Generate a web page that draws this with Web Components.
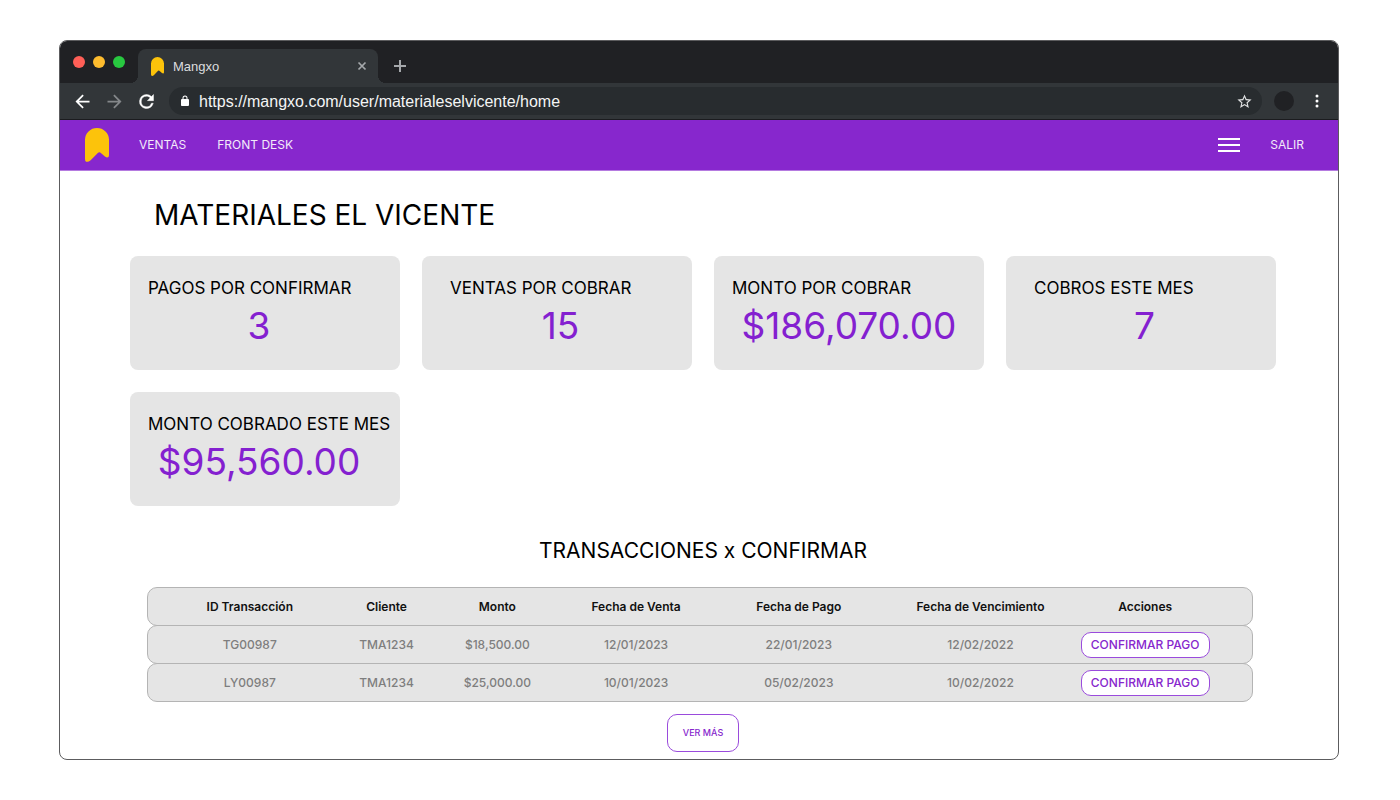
<!DOCTYPE html>
<html lang="es">
<head>
<meta charset="utf-8">
<meta name="viewport" content="width=device-width, initial-scale=1">
<title>Mangxo</title>
<style>
  body { margin: 0; background: #fff; color: #000; font-family: Inter, "Open Sans", sans-serif; }
</style>
</head>
<body>
<mx-browser tab-title="Mangxo" url="https://mangxo.com/user/materialeselvicente/home">
  <mx-navbar>
    <mx-nav-link href="#ventas">VENTAS</mx-nav-link>
    <mx-nav-link href="#front-desk">FRONT DESK</mx-nav-link>
    <mx-nav-link slot="end" href="#salir">SALIR</mx-nav-link>
  </mx-navbar>
  <mx-dashboard>
    <span slot="title">MATERIALES EL VICENTE</span>
    <mx-stat slot="stats" label="PAGOS POR CONFIRMAR">3</mx-stat>
    <mx-stat slot="stats" label="VENTAS POR COBRAR" inset>15</mx-stat>
    <mx-stat slot="stats" label="MONTO POR COBRAR" even>$186,070.00</mx-stat>
    <mx-stat slot="stats" label="COBROS ESTE MES" inset>7</mx-stat>
    <mx-stat slot="stats" label="MONTO COBRADO ESTE MES">$95,560.00</mx-stat>
    <span slot="section">TRANSACCIONES x CONFIRMAR</span>
    <mx-transactions></mx-transactions>
    <mx-button slot="more" size="large">VER MÁS</mx-button>
  </mx-dashboard>
</mx-browser>

<script>
const define = (name, render) => customElements.define(name, class extends HTMLElement {
  constructor() {
    super();
    this.attachShadow({ mode: "open" });
  }
  connectedCallback() {
    this.shadowRoot.innerHTML = render(this);
  }
});

define("mx-logo", () => `
  <style>
    :host { display: block; flex: none; }
    svg { display: block; width: 100%; height: 100%; }
  </style>
  <svg viewBox="0 0 68 100" preserveAspectRatio="none" aria-hidden="true">
    <path fill="#fcc30b" d="M0 34A34 34 0 0 1 68 34V80Q68 88 60 86Q56 84 50 78L43 72Q40 70 37 73L16 95Q9 101 3 99Q0 97 0 91Z"/>
  </svg>`);

define("mx-browser", el => `
  <style>
    :host { display: flex; flex-direction: column; box-sizing: border-box; min-height: calc(100vh - 80px);
      margin: 40px 61px 40px 59px; border: 1px solid #5c5c5e; border-radius: 8px; overflow: hidden;
      font-family: Inter, "Open Sans", sans-serif; }
    button { display: grid; place-items: center; margin: 0; padding: 0; border: 0; background: none; }
    svg { display: block; }
    .tabs { display: flex; align-items: flex-end; height: 42px; background: #202124; }
    .lights { display: flex; gap: 8px; height: 42px; align-items: center; padding: 0 13px; }
    .lights i { width: 12px; height: 12px; border-radius: 50%; background: var(--c); }
    .tab { position: relative; display: flex; align-items: center; box-sizing: border-box; width: 240px; height: 34px;
      padding: 0 10px 0 13px; border-radius: 8px 8px 0 0; background: #323639; }
    .tab::before, .tab::after { content: ""; position: absolute; bottom: 0; width: 8px; height: 8px; }
    .tab::before { right: 100%; background: radial-gradient(circle at 0 0, transparent 8px, #323639 8px); }
    .tab::after { left: 100%; background: radial-gradient(circle at 100% 0, transparent 8px, #323639 8px); }
    .tab mx-logo { width: 13px; height: 19px; }
    .tab span { flex: 1; margin-left: 9px; font: 13px "Liberation Sans", Arial, sans-serif; color: #dcdddf; }
    .plus { width: 12px; height: 34px; margin-left: 16px; }
    .bar { display: flex; align-items: center; height: 36px; padding: 0 14px 0 12px; background: #323639;
      border-bottom: 1px solid #1b1c1f; }
    .history { display: flex; gap: 11px; margin-right: 12px; }
    .address { display: flex; flex: 1; align-items: center; gap: 8px; height: 28px; min-width: 0; padding: 0 9px 0 10px;
      border-radius: 14px; background: #282c2f; }
    input { flex: 1; min-width: 0; box-sizing: border-box; height: 28px; padding: 2px 0 0; border: 0; outline: 0;
      background: none; color: #f4f5f5; font: 16px "Liberation Sans", Arial, sans-serif; }
    .avatar { width: 20px; height: 20px; margin: 0 16px 0 12px; border-radius: 50%; background: #202124; }
    .page { flex: 1; }
  </style>
  <div class="tabs">
    <div class="lights"><i style="--c:#ff5f57"></i><i style="--c:#febc2e"></i><i style="--c:#28c840"></i></div>
    <div class="tab">
      <mx-logo></mx-logo>
      <span>${el.getAttribute("tab-title")}</span>
      <button aria-label="Cerrar pestaña"><svg width="12" height="12" viewBox="0 0 12 12"><path d="M2.5 2.5l7 7M9.500 2.500l-7 7" stroke="#a5a8ab" stroke-width="1.700"/></svg></button>
    </div>
    <button class="plus" aria-label="Nueva pestaña"><svg width="12" height="12" viewBox="0 0 12 12"><path d="M6 0v12M0 6h12" stroke="#a5a8ab" stroke-width="2"/></svg></button>
  </div>
  <div class="bar">
    <div class="history">
      <button aria-label="Atrás"><svg width="21" height="21" viewBox="0 0 24 24" fill="#fff"><path d="M20 11H7.830l5.590-5.590L12 4l-8 8 8 8 1.410-1.410L7.830 13H20z"/></svg></button>
      <button aria-label="Adelante"><svg width="21" height="21" viewBox="0 0 24 24" fill="#84878a"><path d="M12 4l-1.410 1.410L16.170 11H4v2h12.170l-5.580 5.590L12 20l8-8z"/></svg></button>
      <button aria-label="Recargar"><svg width="21" height="21" viewBox="0 0 24 24" fill="#fff" stroke="#fff" stroke-width=".5"><path d="M17.650 6.350A7.960 7.960 0 0 0 12 4a8 8 0 1 0 7.730 10h-2.080A6 6 0 1 1 12 6c1.660 0 3.140.69 4.220 1.780L13 11h7V4z"/></svg></button>
    </div>
    <div class="address">
      <svg width="12" height="12" viewBox="0 0 24 24" fill="#fff"><path d="M18 8h-1V6A5 5 0 0 0 7 6v2H6a2 2 0 0 0-2 2v10c0 1.100.9 2 2 2h12a2 2 0 0 0 2-2V10a2 2 0 0 0-2-2zM9 6a3 3 0 0 1 6 0v2H9z"/></svg>
      <input aria-label="Dirección" value="${el.getAttribute("url")}">
      <button aria-label="Favorito"><svg width="17" height="17" viewBox="0 0 24 24" fill="#dfe0e1"><path d="M22 9.240l-7.190-.62L12 2 9.190 8.630 2 9.240l5.460 4.730L5.820 21 12 17.270 18.180 21l-1.630-7.030zM12 15.400l-3.760 2.270 1-4.280-3.320-2.880 4.380-.38L12 6.100l1.710 4.040 4.380.38-3.320 2.880 1 4.280z"/></svg></button>
    </div>
    <div class="avatar"></div>
    <button aria-label="Menú"><svg width="14" height="14" viewBox="0 0 14 14" fill="#fff"><circle cx="7" cy="2" r="1.500"/><circle cx="7" cy="7" r="1.500"/><circle cx="7" cy="12" r="1.500"/></svg></button>
  </div>
  <div class="page"><slot></slot></div>`);

define("mx-nav-link", el => `
  <style>
    :host { display: block; font-size: 12px; line-height: 16px; }
    a { color: #f3e9fa; text-decoration: none; white-space: nowrap; }
  </style>
  <a href="${el.getAttribute("href")}"><slot></slot></a>`);

define("mx-navbar", () => `
  <style>
    :host { display: block; }
    nav { display: flex; align-items: center; gap: 30px; height: 50px; padding: 0 34px 0 25px; background: #8727cd;
      border-bottom: 1px solid #b57be0; }
    mx-logo { width: 24px; height: 34px; }
    .links { display: flex; flex: 1; gap: 31px; }
    button { width: 22px; height: 22px; padding: 0; border: 0; background: none; }
    svg { display: block; }
  </style>
  <nav>
    <mx-logo></mx-logo>
    <div class="links"><slot></slot></div>
    <button aria-label="Abrir menú"><svg width="22" height="22" viewBox="0 0 22 22"><path d="M0 5h22M0 11h22M0 17h22" stroke="#fff" stroke-width="2"/></svg></button>
    <slot name="end"></slot>
  </nav>`);

define("mx-stat", el => `
  <style>
    :host { display: block; box-sizing: border-box; height: 114px; padding: 20px 30px 0 18px; border-radius: 8px;
      background: #e5e5e5; white-space: nowrap; }
    :host([inset]) { padding-right: 21px; padding-left: 28px; }
    :host([even]) { padding-right: 18px; }
    h2 { margin: 0; font-size: 17px; line-height: 24px; font-weight: 400; }
    p { margin: 0; display: flex; justify-content: center; font-size: 37px; line-height: 52px; font-weight: 400; color: #8420d0; }
  </style>
  <h2>${el.getAttribute("label")}</h2>
  <p><slot></slot></p>`);

define("mx-button", () => `
  <style>
    :host { display: inline-block; }
    button { display: block; box-sizing: border-box; min-width: 129px; height: 26px; padding: 0 8px; border: 1px solid #9a4bdc;
      border-radius: 10px; background: #fff; color: #8727cd; font: 500 12px/16px Inter, "Open Sans", sans-serif; }
    :host([size="large"]) button { min-width: 72px; height: 38px; font-size: 9px; }
  </style>
  <button><slot></slot></button>`);

const columns = ["ID Transacción", "Cliente", "Monto", "Fecha de Venta", "Fecha de Pago", "Fecha de Vencimiento", "Acciones"];
const sales = [
  ["TG00987", "TMA1234", "$18,500.00", "12/01/2023", "22/01/2023", "12/02/2022"],
  ["LY00987", "TMA1234", "$25,000.00", "10/01/2023", "05/02/2023", "10/02/2022"],
];

define("mx-transactions", () => `
  <style>
    :host { display: block; }
    table, thead, tbody { display: block; }
    tr { display: grid; align-items: center; box-sizing: border-box; height: 39px; margin-bottom: -1px; padding-right: 24px;
      grid-template-columns: 204fr 70fr 152fr 126fr 200fr 164fr 166fr;
      border: 1px solid #b4b4b4; border-radius: 10px; background: #e5e5e5; }
    th, td { display: flex; justify-content: center; min-width: 0; padding: 0; font-size: 12px; line-height: 16px;
      font-weight: 500; color: #7e7e7e; white-space: nowrap; }
    th { font-weight: 600; color: #111; }
  </style>
  <table>
    <thead><tr>${columns.map(c => `<th scope="col">${c}</th>`).join("")}</tr></thead>
    <tbody>${sales.map(r => `<tr>${r.map(c => `<td>${c}</td>`).join("")}<td><mx-button>CONFIRMAR PAGO</mx-button></td></tr>`).join("")}</tbody>
  </table>`);

define("mx-dashboard", () => `
  <style>
    :host { display: block; padding: 24px 62px 7px 70px; }
    h1 { margin: 0 0 21px; padding-left: 24px; font-size: 28px; line-height: 40px; font-weight: 400; }
    .stats { display: grid; grid-template-columns: repeat(4, minmax(0, 1fr)); gap: 22px; }
    h2 { margin: 29px 0 20px; font-size: 21px; line-height: 32px; font-weight: 400; text-align: center; }
    .table { padding: 0 23px 0 17px; }
    .more { display: flex; justify-content: center; margin-top: 13px; }
  </style>
  <h1><slot name="title"></slot></h1>
  <div class="stats"><slot name="stats"></slot></div>
  <h2><slot name="section"></slot></h2>
  <div class="table"><slot></slot></div>
  <div class="more"><slot name="more"></slot></div>`);
</script>
</body>
</html>
